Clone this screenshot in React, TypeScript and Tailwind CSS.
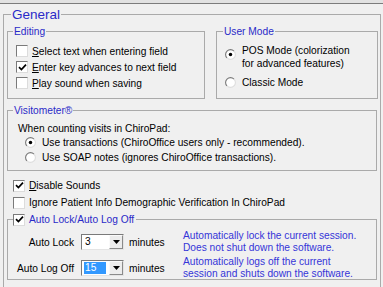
import React from 'react';

const Check = ({ checked = false }: { checked?: boolean }) => (
  <span className="w-[12px] h-[12px] shrink-0 flex items-center justify-center bg-white border border-t-[#7a7a7a] border-l-[#7a7a7a] border-r-[#dcdcdc] border-b-[#dcdcdc]">
    {checked && (
      <svg width="9" height="9" viewBox="0 0 9 9">
        <path d="M1 4.2 L3.4 6.6 L8 1.6" stroke="#000" strokeWidth="1.7" fill="none" />
      </svg>
    )}
  </span>
);

const Radio = ({ checked = false }: { checked?: boolean }) => (
  <svg width="11" height="11" viewBox="0 0 12 12" className="shrink-0">
    <circle cx="6" cy="6" r="5.3" fill="#fff" />
    <path d="M9.8 2.2 A5.3 5.3 0 0 0 2.2 9.8" stroke="#7a7a7a" strokeWidth="1.2" fill="none" />
    <path d="M2.2 9.8 A5.3 5.3 0 0 0 9.8 2.2" stroke="#dedede" strokeWidth="1.2" fill="none" />
    {checked && <circle cx="6" cy="6" r="1.9" fill="#000" />}
  </svg>
);

const Combo = ({ value, selected = false }: { value: string; selected?: boolean }) => (
  <div className="w-[43px] h-[16px] flex bg-white border border-t-[#7a7a7a] border-l-[#7a7a7a] border-r-[#e4e4e4] border-b-[#e4e4e4]">
    <div className="flex-1 flex items-center pl-[2px]">
      <span className={selected ? 'bg-[#3399ff] text-white px-[1px] w-[22px] leading-[12px]' : 'px-[1px] leading-[12px]'}>
        {value}
      </span>
    </div>
    <div className="w-[14px] flex items-center justify-center bg-[#ececec] border border-t-[#fafafa] border-l-[#fafafa] border-r-[#8a8a8a] border-b-[#8a8a8a]">
      <svg width="7" height="4" viewBox="0 0 7 4">
        <path d="M0 0 L7 0 L3.5 4 Z" fill="#000" />
      </svg>
    </div>
  </div>
);

const legendBlue = 'text-[#2a2ac8]';
const noteBlue = 'text-[#3535d8]';

export default function App() {
  return (
    <div className="w-[383px] h-[287px] overflow-hidden bg-[#f0f0f0] text-black text-[10.2px] leading-[13px] font-['Liberation_Sans',Arial,sans-serif]">
      <div className="h-[4px] bg-[#e2e2e2] border-b border-[#7c7c7c]" />

      <fieldset className="mt-[3px] ml-[3px] w-[378px] border border-[#aaaaaa] pl-[3px] pb-[20px]">
        <legend className={`ml-[4px] px-[1px] text-[13.5px] leading-[15px] ${legendBlue}`}>General</legend>

        <div className="mt-[3px] flex gap-[11px]">
          <fieldset className="w-[198px] h-[74px] border border-[#aaaaaa] pl-[8px] pt-[5px]">
            <legend className={`ml-[-3px] px-[1px] ${legendBlue}`}>Editing</legend>
            <div className="flex flex-col">
              {[
                ['S', 'elect text when entering field', false],
                ['E', 'nter key advances to next field', true],
                ['P', 'lay sound when saving', false],
              ].map(([k, rest, c]) => (
                <div key={k as string} className="h-[16px] flex items-center gap-[4px]">
                  <Check checked={c as boolean} />
                  <span>
                    <span className="underline">{k as string}</span>
                    {rest as string}
                  </span>
                </div>
              ))}
            </div>
          </fieldset>

          <fieldset className="w-[162px] h-[74px] border border-[#aaaaaa] pl-[8px] pt-[5px]">
            <legend className={`ml-[-2px] px-[1px] ${legendBlue}`}>User Mode</legend>
            <div className="flex items-start gap-[6px]">
              <div className="mt-[6px]"><Radio checked /></div>
              <div className="leading-[12.5px] pt-[2px]">
                POS Mode (colorization
                <br />
                for advanced features)
              </div>
            </div>
            <div className="mt-[6px] flex items-center gap-[6px]">
              <Radio />
              <span>Classic Mode</span>
            </div>
          </fieldset>
        </div>

        <fieldset className="mt-[5px] w-[370px] h-[67px] border border-[#aaaaaa] pl-[10px] pt-[4px]">
          <legend className={`ml-[-5px] px-[1px] ${legendBlue}`}>Visitometer®</legend>
          <div className="h-[14px] flex items-center">When counting visits in ChiroPad:</div>
          <div className="pl-[7px]">
            <div className="h-[15px] flex items-center gap-[6px]">
              <Radio checked />
              <span>Use transactions (ChiroOffice users only - recommended).</span>
            </div>
            <div className="h-[14px] flex items-center gap-[6px]">
              <Radio />
              <span>Use SOAP notes (ignores ChiroOffice transactions).</span>
            </div>
          </div>
        </fieldset>

        <div className="mt-[6px] pl-[6px]">
          <div className="h-[17px] flex items-center gap-[4px]">
            <Check checked />
            <span>
              <span className="underline">D</span>isable Sounds
            </span>
          </div>
          <div className="h-[17px] flex items-center gap-[4px]">
            <Check />
            <span>Ignore Patient Info Demographic Verification In ChiroPad</span>
          </div>
        </div>

        <fieldset className="mt-[1px] w-[370px] h-[68px] border border-[#aaaaaa] pl-[1px] pt-[3px]">
          <legend className="ml-[4px] pr-[2px] flex items-center gap-[4px] h-[15px]">
            <Check checked />
            <span className={legendBlue}>Auto Lock/Auto Log Off</span>
          </legend>
          <div className="flex flex-col gap-[2px]">
            <div className="flex items-center">
              <div className="w-[65px] text-right">Auto Lock</div>
              <div className="ml-[7px]"><Combo value="3" /></div>
              <div className="ml-[5px] w-[54px]">minutes</div>
              <div className={`leading-[12px] ${noteBlue}`}>
                Automatically lock the current session.
                <br />
                Does not shut down the software.
              </div>
            </div>
            <div className="flex items-center">
              <div className="w-[65px] text-right">Auto Log Off</div>
              <div className="ml-[7px]"><Combo value="15" selected /></div>
              <div className="ml-[5px] w-[54px]">minutes</div>
              <div className={`leading-[12px] ${noteBlue}`}>
                Automatically logs off the current
                <br />
                session and shuts down the software.
              </div>
            </div>
          </div>
        </fieldset>
      </fieldset>
    </div>
  );
}
